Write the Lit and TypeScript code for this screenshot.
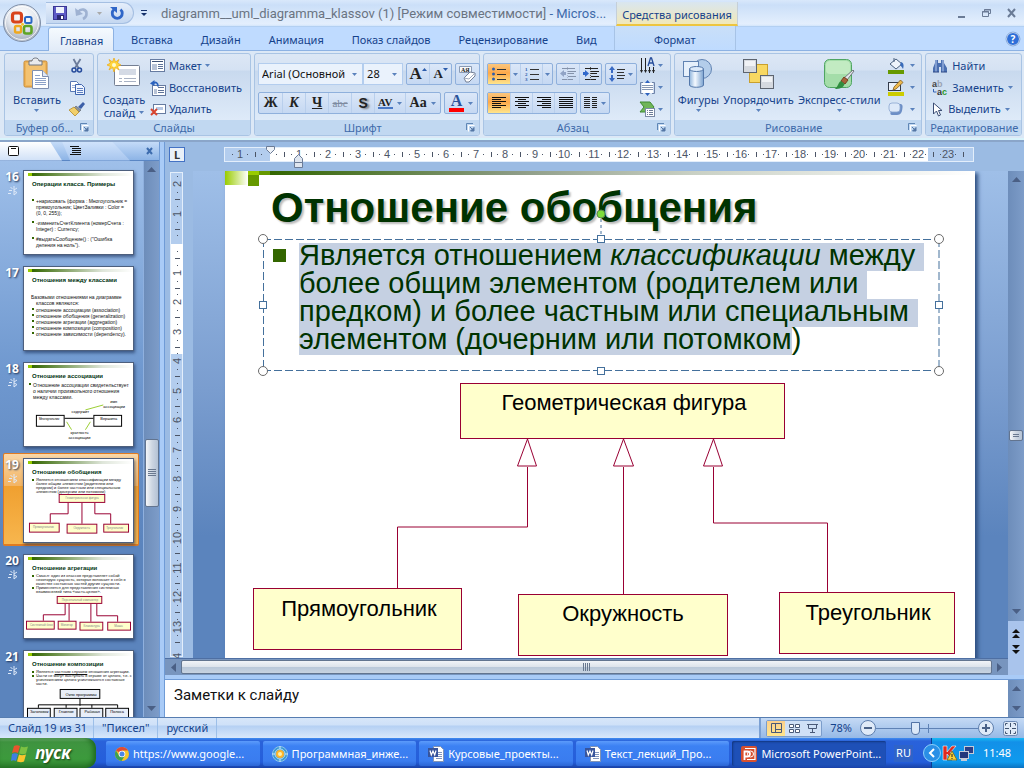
import { LitElement, html, svg, css, TemplateResult } from "lit";
import { customElement } from "lit/decorators.js";

const icon = (w: number, h: number, body: unknown, cls = "") =>
  html`<svg class="ico ${cls}" width=${w} height=${h} viewBox="0 0 ${w} ${h}" aria-hidden="true">${body}</svg>`;

const down = html`<svg class="ico arrow" width="5" height="3" viewBox="0 0 5 3" aria-hidden="true"><path d="M0 0h5L2.5 3z" fill="#5a82bd"/></svg>`;

const launcher = html`<button class="launch" aria-label="Параметры">${icon(9, 9, svg`<path d="M.5 7V.5H7" fill="none" stroke="#5f86b5"/><path d="M2.500 8.500V2.500h6" fill="none" stroke="#fff"/><path d="M4 4l3 3M8 4.500V8H4.500z" stroke="#5577a5" fill="#5577a5"/>`)}</button>`;

const icons = {
  orb: icon(40, 40, svg`
    <defs><radialGradient id="orb" cx=".5" cy=".3" r=".75"><stop offset="0" stop-color="#fff"/><stop offset=".5" stop-color="#e3e7ee"/><stop offset=".85" stop-color="#aab3c2"/><stop offset="1" stop-color="#f5f8fc"/></radialGradient></defs>
    <circle cx="20" cy="20" r="18.500" fill="url(#orb)" stroke="#7f8fa8"/>
    <circle cx="20" cy="20" r="16.500" fill="none" stroke="#fff" opacity=".8"/>
    <rect x="10.500" y="10" width="9" height="9" rx="2.500" fill="none" stroke="#d8431b" stroke-width="3.200"/>
    <rect x="23" y="14" width="6.500" height="6" rx="1.500" fill="none" stroke="#2a68c4" stroke-width="2"/>
    <rect x="13" y="23" width="6" height="6.500" rx="1.500" fill="none" stroke="#efa81e" stroke-width="2.400"/>
    <rect x="22" y="23" width="7.500" height="7.500" rx="2" fill="none" stroke="#5fa526" stroke-width="2.600"/>
    <circle cx="20.500" cy="21.300" r="1.500" fill="#f4c430"/>`),
  save: icon(14, 14, svg`<rect x=".5" y=".5" width="13" height="13" fill="#5d5ac6" stroke="#3b3794"/><rect x="3" y="1" width="8" height="6" fill="#eef2fc"/><rect x="4" y="9" width="7" height="5" fill="#2c2a73"/><rect x="8" y="10" width="2" height="3" fill="#fff"/>`),
  undo: icon(14, 13, svg`<path d="M3 5C6 1 12 2 11.500 7c0 2-1.500 4-3.500 5" fill="none" stroke="#9fb2d2" stroke-width="2.600"/><path d="M0 1l1 8 7-2z" fill="#9fb2d2"/>`),
  redo: icon(14, 14, svg`<path d="M10.500 3.500A5 5 0 1 1 4 3.500" fill="none" stroke="#2f66c8" stroke-width="2.800"/><path d="M0 1h7v6z" fill="#2f66c8"/>`),
  paste: icon(28, 32, svg`<rect x="1" y="3" width="23" height="26" rx="1.500" fill="#efb458" stroke="#c78a36"/><rect x="3" y="5" width="19" height="22" fill="#f3c271"/><path d="M6 3h3c0-4 7-4 7 0h3v4H6z" fill="#e9eaec" stroke="#6f7580"/><path d="M9.500 12.500h10l6 6v12h-16z" fill="#fff" stroke="#7e8fb0"/><path d="M19.500 12.500v6h6" fill="#dfe7f5" stroke="#7e8fb0"/><path d="M12 17.500h5M12 20.500h11M12 22.500h11M12 24.500h11M12 26.500h11" stroke="#8ca1c8"/>`),
  cut: icon(12, 14, svg`<path d="M2.500 0L7.500 9M9.500 0L4 9" stroke="#6c7c9b" stroke-width="1.800"/><circle cx="3" cy="11" r="2" fill="none" stroke="#254b9c" stroke-width="1.500"/><circle cx="8.500" cy="11" r="2" fill="none" stroke="#254b9c" stroke-width="1.500"/>`),
  copy: icon(16, 14, svg`<path d="M1.500.5h6l2 2v8h-8z" fill="#fff" stroke="#5878b5"/><path d="M3 4.500h5M3 6.500h5" stroke="#9db2d9"/><path d="M6.500 3.500h6l3 3v7h-9z" fill="#eef4ff" stroke="#3d64ae"/><path d="M8 7.500h6M8 9.500h6M8 11.500h6" stroke="#5d7fc0"/>`),
  painter: icon(16, 14, svg`<path d="M9 5l5-5 2 2-4 5z" fill="#3c5fa8"/><path d="M7 4l5 4-2 2-5-4z" fill="#8c939e" stroke="#565c66" stroke-width=".6"/><path d="M0 8l5-3 5 5-4 4z" fill="#f1cf6b" stroke="#b18a2c" stroke-width=".8"/>`),
  newSlide: icon(34, 32, svg`<rect x="7.500" y="7.500" width="25" height="20" rx="1" fill="#fff" stroke="#747f93"/><rect x="12" y="11" width="17" height="6" fill="#d4dae5"/><path d="M12 20.500h3M17 20.500h12M12 23.500h3M17 23.500h12" stroke="#a8b2c4"/><path d="M7 0l1.500 4L12 1.500 10.500 5l3.500 2-3.500 1.500L12 12 8.500 9.500 7 14 5.500 9.500 2 12l1.500-3.500L0 7l3.500-2L2 1.500 5.500 4z" fill="#ffd53c" stroke="#eca812" stroke-width=".7"/><circle cx="7" cy="7" r="2" fill="#fffbd0"/>`),
  layout: icon(16, 13, svg`<rect x=".5" y=".5" width="14" height="12" fill="#fff" stroke="#667ba0"/><path d="M2 2.500h11" stroke="#3e5275"/><rect x="2" y="5" width="5" height="6" fill="#b8c3d6"/><path d="M8 5.500h5M8 7.500h5M8 9.500h5" stroke="#5f7499"/>`),
  reset: icon(16, 16, svg`<rect x="2.500" y="5.500" width="13" height="10" fill="#fff" stroke="#667ba0"/><path d="M8 7.500h6M8 10.500h6M8 12.500h6" stroke="#5f7499"/><rect x="4" y="9" width="3" height="5" fill="#b8c3d6"/><path d="M2 3.500c4-2 6-1 6 3" fill="none" stroke="#2b62bd" stroke-width="1.800"/><path d="M0 3.500L4.500 0v6z" fill="#2b62bd"/>`),
  del: icon(16, 13, svg`<rect x="3.500" y="1.500" width="12" height="9" fill="#fff" stroke="#667ba0"/><rect x="6" y="4" width="7" height="3" fill="#b7c8e4"/><path d="M1 6l6 6M7 6l-6 6" stroke="#d9442e" stroke-width="2"/>`),
  clear: icon(18, 17, svg`<path d="M.5.5h12v6H.5z" fill="#f7f9fc" stroke="#8a9bb5"/><text x="2" y="6" font-size="6" font-weight="bold" fill="#222">АЯ</text><path d="M5 12l6-6 5 1v3l-6 6H7z" fill="#fff" stroke="#737f95"/><path d="M5 12l5 1 6-6" fill="none" stroke="#a0aabd"/>`),
  bullets: icon(14, 14, svg`<g fill="#2f5fae"><circle cx="1.500" cy="2" r="1.500"/><circle cx="1.500" cy="7" r="1.500"/><circle cx="1.500" cy="12" r="1.500"/></g><path d="M5 2.500h9M5 7.500h9M5 12.500h9" stroke="#333"/>`),
  numbers: icon(14, 14, svg`<g fill="#2f5fae" font-size="5" font-weight="bold"><text x="0" y="4">1</text><text x="0" y="9">2</text><text x="0" y="14">3</text></g><path d="M5 2.500h9M5 7.500h9M5 12.500h9" stroke="#333"/>`),
  outdent: icon(16, 14, svg`<path d="M2 1.500h13M8 4.500h8M8 6.500h6M8 9.500h8M2 12.500h11" stroke="#8593ab"/><path d="M7.500 0v14" stroke="#a9b6cc" stroke-dasharray="1 1"/><path d="M0 6.500L4 3v2h2v3H4v2z" fill="#91a4c6"/>`),
  indent: icon(16, 14, svg`<path d="M2 1.500h13M8 4.500h8M8 6.500h6M8 9.500h8M2 12.500h11" stroke="#222"/><path d="M7.500 0v14" stroke="#555" stroke-dasharray="1 1"/><path d="M6 6.500L2 3v2H0v3h2v2z" fill="#2f68cc"/>`),
  lineSp: icon(16, 16, svg`<path d="M3 0L6 4H4v3H2V4H0zM3 16l3-4H4V9H2v3H0z" fill="#3a6bc4"/><path d="M8 3.500h8M8 6.500h7M8 9.500h8M8 12.500h7" stroke="#333"/>`),
  left: icon(14, 12, svg`<path d="M0 .5h14M0 2.500h9M0 4.500h14M0 6.500h9M0 8.500h14M0 10.500h9" stroke="#111"/>`),
  center: icon(14, 12, svg`<path d="M0 .5h14M3 2.500h8M0 4.500h14M3 6.500h8M0 8.500h14M3 10.500h8" stroke="#111"/>`),
  right: icon(14, 12, svg`<path d="M0 .5h14M5 2.500h9M0 4.500h14M5 6.500h9M0 8.500h14M5 10.500h9" stroke="#111"/>`),
  justify: icon(14, 12, svg`<path d="M0 .5h14M0 2.500h14M0 4.500h14M0 6.500h14M0 8.500h14M0 10.500h14" stroke="#111"/>`),
  columns: icon(14, 12, svg`<path d="M0 .5h6M8 .5h5M0 2.500h6M8 2.500h5M0 4.500h6M8 4.500h5M0 6.500h6M8 6.500h5M0 8.500h6M8 8.500h5M0 10.500h6M8 10.500h5" stroke="#222"/>`),
  textDir: icon(15, 16, svg`<path d="M1.500 0v14M5.500 0v14M9.500 9v6M13.500 9v6" stroke="#222"/><path d="M0 12l1.500 3L3 12zM4 12l1.500 3L7 12zM8 12l1.500 3 1.500-3zM12 12l1.500 3 1.500-3z" fill="#222"/><path d="M8 8l2.500-8h1L14 8M9 5h4.500" fill="none" stroke="#254c9b" stroke-width="1.300"/>`),
  alignText: icon(15, 16, svg`<path d="M3 2.500H.5v11H3M12 2.500h2.500v11H12" fill="none" stroke="#6f83a8"/><rect x="2" y="3" width="11" height="10" fill="#fff"/><path d="M2 5.500h11M2 7.500h11M2 9.500h11" stroke="#8797b2"/><path d="M7.500 0l2.500 3h-5zM7.500 16l2.500-3h-5z" fill="#2f62bd"/>`),
  smartArt: icon(15, 16, svg`<path d="M0 1h10l4 5-4 5H0l4-5z" fill="#6fb558" stroke="#3f8a32"/><rect x="5.500" y="7.500" width="9" height="8" fill="#fff" stroke="#7a8aa5"/><path d="M7 9.500h1M9 9.500h4M7 11.500h1M9 11.500h4M7 13.500h1M9 13.500h4" stroke="#6b7c98"/>`),
  shapes: icon(32, 32, svg`<defs><linearGradient id="cyl"><stop offset="0" stop-color="#8fb4dc"/><stop offset=".4" stop-color="#f4f9ff"/><stop offset="1" stop-color="#7ba3d0"/></linearGradient></defs><circle cx="20" cy="11" r="9.500" fill="#b3cdea" stroke="#6183b2"/><rect x="1.500" y="3.500" width="15" height="15" fill="#e6f0fb" stroke="#6183b2"/><path d="M7.500 11v16c0 3 14 3 14 0V11z" fill="url(#cyl)" stroke="#5478aa"/><ellipse cx="14.500" cy="11" rx="7" ry="2.500" fill="#dceafa" stroke="#5478aa"/>`),
  arrange: icon(32, 32, svg`<rect x="6.500" y="6.500" width="18" height="18" fill="#f8d862" stroke="#c9a02d"/><rect x=".5" y="1.500" width="13" height="13" fill="#d5d9df" stroke="#5d646f"/><rect x="2" y="3" width="10" height="5" fill="#f0f2f5"/><rect x="17.500" y="17.500" width="13" height="13" fill="#d5d9df" stroke="#5d646f"/><rect x="19" y="19" width="10" height="5" fill="#f0f2f5"/>`),
  styles: icon(32, 32, svg`<rect x="1.500" y="1.500" width="27" height="28" rx="5" fill="#a4dda9" stroke="#4fa562"/><rect x="3" y="3" width="24" height="13" rx="4" fill="#c2ebc2"/><path d="M30 12l1 1-7 9-3-2z" fill="#e4e6e9" stroke="#737880"/><path d="M21 19l4 3-3 4-4-3z" fill="#a5633a" stroke="#75411f"/><path d="M18 23l3.500 3c-1 4-5 5-10 5 4-2 3-6 6.500-8z" fill="#2f8d3e"/>`),
  fill: icon(16, 16, svg`<path d="M2 6l6-5 6 5-6 5z" fill="#eff4fb" stroke="#4b617f"/><path d="M6 4V0" stroke="#4b617f"/><path d="M13 4c3 1 3 4 2 7-1-2-2-3-3-4z" fill="#396bb9"/><rect x="0" y="12" width="16" height="4" fill="#669900"/>`),
  outline: icon(16, 16, svg`<rect x=".5" y="2.500" width="12" height="8" fill="#eaf1fb" stroke="#333b4a"/><path d="M12.500 0L15 2.500 8 9l-3 1 1-3z" fill="#eeb94d" stroke="#7e5a20" stroke-width=".8"/><rect x="0" y="12" width="16" height="4" fill="#cccc00"/>`),
  effects: icon(16, 14, svg`<path d="M3 9l3-7h6c3 0 3 2 2 7-1 3-3 4-5 4H4c-2 0-2-2-1-4z" fill="#6d8fc6"/><rect x="1" y="1" width="11" height="9" rx="3" fill="#dde9f9" stroke="#8aa6d0" stroke-width=".8"/>`),
  find: icon(16, 14, svg`<path d="M3 1h3v3h3V1h3v3l3 5v4H9V8H7v5H1V9l2-5z" fill="#4a6fb1"/><path d="M4 1v12M11 1v12" stroke="#b5caee"/><path d="M1 13h6M9 13h6" stroke="#2a4684"/>`),
  replace: icon(16, 16, svg`<g class="abc"><text x="0" y="7" fill="#444">a<tspan fill="#9aa3b3">b</tspan></text><text x="5" y="15" fill="#333">a<tspan fill="#2c9a2c">c</tspan></text></g><path d="M1.500 9v3h3" fill="none" stroke="#3563b5"/>`),
  select: icon(12, 15, svg`<path d="M1.500 1v11l3-3 2 5 2-1-2-4.500H10z" fill="#fff" stroke="#3d4e75"/>`),
  word: icon(16, 16, svg`<path d="M5.500.5h7l3 3v12h-10z" fill="#fff" stroke="#8193b4"/><path d="M8 6.500h6M8 8.500h6M8 10.500h6M8 12.500h6" stroke="#7f95bf"/><rect x="0" y="2" width="10" height="9" fill="#37549c"/><path d="M2 4.500l1.300 4.500 1.700-4 1.700 4L8 4.500" fill="none" stroke="#fff" stroke-width="1.200"/>`),
  ppt: icon(16, 16, svg`<rect width="16" height="16" rx="2" fill="#d8502f"/><path d="M4 2.500h10v11H6" fill="none" stroke="#fff" stroke-width="1.200"/><path d="M3.500 14V5.500h3a2.500 2.500 0 0 1 0 5h-3" fill="none" stroke="#fff" stroke-width="1.800"/><circle cx="9.500" cy="8" r="3" fill="none" stroke="#fff"/>`),
  chrome: icon(14, 14, svg`<circle cx="7" cy="7" r="7" fill="#f5c52a"/><path d="M7 7L1 3.400A7 7 0 0 1 13 3.500H7z" fill="#dd4b39"/><path d="M1 3.400A7 7 0 0 0 6.500 14L10 8.500 4.300 9z" fill="#3ba055"/><circle cx="7" cy="7" r="3.300" fill="#fff"/><circle cx="7" cy="7" r="2.500" fill="#4a86e8"/>`),
  globe: icon(16, 16, svg`<circle cx="8" cy="8" r="7.500" fill="#3b9ad5" stroke="#8cc3ea"/><circle cx="8" cy="8" r="5" fill="none" stroke="#b6dcf3"/><circle cx="8" cy="8" r="4" fill="#ffb52b"/><circle cx="8" cy="8" r="2" fill="#fff0a8"/><path d="M8 0v3M8 13v3M0 8h3M13 8h3" stroke="#cfe8f8"/>`),
  anim: icon(9, 10, svg`<path d="M2.500 1l2 2M6 0v9M1 4.500h3M0 7.500h3M6 4l3-2M6 9l3-2.500-3-1.500" fill="none" stroke="#dfe9f8"/>`),
};

interface Small { i: TemplateResult; t?: string; d?: boolean; }
const small = (s: Small) => html`<button class="small">${s.i}${s.t ? html`<span>${s.t}</span>` : ""}${s.d ? down : ""}</button>`;
const big = (i: TemplateResult, t: TemplateResult | string) => html`<button class="big">${i}<span>${t}</span></button>`;
const group = (cls: string, label: string, body: TemplateResult, launch = true) => html`
  <section class="group ${cls}" aria-label=${label}>
    <div class="group-body">${body}</div>
    <div class="group-label"><span>${label}</span>${launch ? launcher : ""}</div>
  </section>`;

const UP = html`<svg class="ico" width="9" height="5" viewBox="0 0 9 5" aria-hidden="true"><path d="M4.500 0L9 5H0z" fill="#4a5f85"/></svg>`;
const DN = html`<svg class="ico" width="9" height="5" viewBox="0 0 9 5" aria-hidden="true"><path d="M0 0h9L4.500 5z" fill="#4a5f85"/></svg>`;

const range = (a: number, b: number) => Array.from({ length: b - a + 1 }, (_, k) => a + k);
const CM = 29.5;

const hRuler = svg`
  <rect x=".5" y=".5" width="749" height="14" fill="#b3cdee" stroke="#e3eefb"/>
  <rect x="46" y="1" width="658" height="13" fill="#fff"/>
  ${range(-1, 23).filter((n) => n !== 0).map((n) => svg`<text x=${Math.round(45 + n * CM)} y="11" text-anchor="middle">${Math.abs(n)}</text>`)}
  ${range(-1, 23).map((n) => {
    const x = Math.round(45 + n * CM);
    return svg`<rect x=${x - 8} y="7" width="1" height="1"/><rect x=${x + 7} y="7" width="1" height="1"/>${x + 15 < 748 ? svg`<rect x=${x + 15} y="5" width="1" height="5"/>` : ""}`;
  })}`;

const vRuler = svg`
  <rect x=".5" y=".5" width="12" height="484" fill="#b3cdee" stroke="#e3eefb"/>
  <rect x="1" y="72" width="12" height="110" fill="#fff"/>
  ${range(-2, 14).filter((n) => n !== 0).map((n) => {
    const y = Math.round(71 + n * CM);
    return svg`<text transform="translate(11 ${y}) rotate(-90)" text-anchor="middle">${n === 14 ? 4 : Math.abs(n)}</text>`;
  })}
  ${range(-2, 13).map((n) => {
    const y = Math.round(71 + n * CM);
    return svg`<rect x="7" y=${y - 8} width="1" height="1"/><rect x="7" y=${y + 8} width="1" height="1"/><rect x="5" y=${y + 15} width="5" height="1"/>`;
  })}`;

const thumbs: { n: number; anim: boolean; title: string; body: TemplateResult }[] = [
  { n: 16, anim: true, title: "Операции класса. Примеры", body: html`
    <ul class="wide"><li>+нарисовать (форма : Многоугольник = прямоугольник; ЦветЗаливки : Color = (0, 0, 255));</li><li>-изменитьСчетКлиента (номерСчета : Integer) : Currency;</li><li>#выдатьСообщение() : ("Ошибка деления на ноль").</li></ul>` },
  { n: 17, anim: false, title: "Отношения между классами", body: html`
    <div class="tiny"><p>Базовыми отношениями на диаграмме классов являются:</p><ul><li>отношение ассоциации (association)</li><li>отношение обобщения (generalization)</li><li>отношение агрегации (aggregation)</li><li>отношение композиции (composition)</li><li>отношение зависимости (dependency).</li></ul></div>` },
  { n: 18, anim: true, title: "Отношение ассоциации", body: html`
    <ul class="mid"><li>Отношение ассоциации свидетельствует о наличии произвольного отношения между классами.</li></ul>
    <svg class="mini" viewBox="0 0 110 40" aria-hidden="true"><g fill="#fff" stroke="#000"><rect x="12.500" y="15.500" width="28" height="11"/><rect x="70.500" y="15.500" width="28" height="11"/><path d="M41 18.500h29"/></g><path d="M80 5L62 10M48 30l-5-8M62 30l5-8" stroke="#9acd32"/><g font-size="4"><text x="15" y="20" font-size="3">Многоугольник</text><text x="77" y="20">Вершина</text><text x="48" y="13">содержит</text><text x="87" y="3">имя</text><text x="80" y="8">ассоциации</text><text x="47" y="34">кратность</text><text x="45" y="39">ассоциации</text></g></svg>` },
  { n: 19, anim: true, title: "Отношение обобщения", body: html`
    <ul class="tiny3"><li>Является отношением классификации между более общим элементом (родителем или предком) и более частным или специальным элементом (дочерним или потомком)</li></ul>
    <svg class="mini" viewBox="0 0 110 44" aria-hidden="true"><g fill="#ffffcc" stroke="#990033"><rect x="35.500" y="2.500" width="46" height="8"/><rect x="5.500" y="31.500" width="30" height="9"/><rect x="43.500" y="32.500" width="30" height="9"/><rect x="80.500" y="32.500" width="25" height="8"/></g><path d="M44.500 11v11h-18v9M58.500 11v21M71.500 11v11h16v10" fill="none" stroke="#990033"/><g fill="#888" font-size="3"><text x="42" y="7">Геометрическая фигура</text><text x="9" y="36">Прямоугольник</text><text x="50" y="37">Окружность</text><text x="83" y="37">Треугольник</text></g></svg>` },
  { n: 20, anim: true, title: "Отношение агрегации", body: html`
    <ul class="tiny3"><li>Смысл: один из классов представляет собой некоторую сущность, которая включает в себя в качестве составных частей другие сущности.</li><li>Применяется для представления системных взаимосвязей типа «часть-целое».</li></ul>
    <svg class="mini" viewBox="0 0 110 40" aria-hidden="true"><g fill="#ffffcc" stroke="#990033"><rect x="33.500" y="4.500" width="45" height="7"/><rect x="2.500" y="29.500" width="28" height="8"/><rect x="34.500" y="29.500" width="18" height="8"/><rect x="56.500" y="30.500" width="23" height="8"/><rect x="84.500" y="30.500" width="23" height="8"/></g><path d="M41.500 12v11h-22v6M45.500 12v17M67.500 12v18M73.500 12v12h21v6" fill="none" stroke="#990033"/><g fill="#888" font-size="3"><text x="38" y="9">Персональный компьютер</text><text x="6" y="34">Системный блок</text><text x="37" y="34">Монитор</text><text x="60" y="35">Клавиатура</text><text x="91" y="35">Мышь</text></g></svg>` },
  { n: 21, anim: true, title: "Отношение композиции", body: html`
    <ul class="tiny3 last21"><li>Является <u>частным случаем</u> отношения агрегации.</li><li>Части не могут выступать в отрыве от целого, т.е. с уничтожением целого уничтожаются составные части.</li></ul>
    <svg class="mini" viewBox="0 0 110 40" aria-hidden="true"><g fill="#e8eef8" stroke="#000"><rect x="36.500" y="1.500" width="40" height="9"/><rect x="3.500" y="20.500" width="23" height="12"/><rect x="30.500" y="20.500" width="23" height="12"/><rect x="56.500" y="20.500" width="23" height="12"/><rect x="82.500" y="20.500" width="23" height="12"/></g><path d="M56.500 11v7M14.500 20v-3h80v3M42.500 17v3M68.500 17v3" fill="none" stroke="#000"/><g font-size="4"><text x="42" y="8">Окно программы</text><text x="6" y="25">Заголовок</text><text x="35" y="25">Главное</text><text x="61" y="25">Рабочая</text><text x="87" y="25">Полоса</text></g></svg>` },
];

const handleC = (x: string, y: string) => svg`<circle cx=${x} cy=${y} r="4.500" fill="#fff" stroke="#6b6b6b"/>`;
const handleS = (x: string, y: string) => svg`<svg x=${x} y=${y} overflow="visible"><rect x="-3.500" y="-3.500" width="7" height="7" fill="#fff" stroke="#44709c"/></svg>`;

@customElement("app-root")
export class AppRoot extends LitElement {
  static styles = css`
    :host { display: flex; flex-direction: column; height: 100vh; overflow: hidden; background: #bfdbff; color: #15428b;
      font: 11px/14px "Noto Sans", "Open Sans", sans-serif; }
    * { box-sizing: border-box; }
    .ico { display: block; flex: none; overflow: visible; }
    .abc { font: bold 9px "Liberation Sans", sans-serif; }
    button { font: inherit; color: inherit; background: none; border: 0; padding: 0; margin: 0; display: flex; align-items: center; justify-content: center; white-space: nowrap; }
    .top { position: relative; display: flex; flex-direction: column; flex: none; }
    .titlebar { display: flex; height: 27px; padding-left: 46px; background: linear-gradient(#d9e8fb 0, #cbdff8 5px, #e4effd 24px, #d3e5fb); border-bottom: 1px solid #b3d0f2; }
    .orb { position: absolute; left: 2px; top: 3px; z-index: 2; }
    .qat { display: flex; align-items: center; gap: 8px; width: 88px; height: 22px; margin-top: 2px; padding-left: 7px; border: 1px solid #a5bfe2; border-left: 0; border-radius: 0 11px 11px 0; background: linear-gradient(#e5eefb, #c4d7f0); }
    .more { width: 20px; height: 25px; }
    .doc { margin: 0; flex: none; width: 462px; padding-left: 7px; font: 13px/28px Roboto, "Noto Sans", sans-serif; color: #6a7482; white-space: nowrap; overflow: hidden; }
    .doc b { font-weight: normal; color: #3e6aaa; }
    .ctx { width: 122px; margin-top: 2px; line-height: 26px; text-align: center; white-space: nowrap; border: solid #c5cfd8; border-width: 0 1px; border-bottom: 2px solid #edc53f; background: linear-gradient(#d9e6f0, #f1e8b9); }
    .win { flex: 1; display: flex; justify-content: flex-end; align-items: center; gap: 16px; padding-right: 8px; }
    .tabs { display: flex; align-items: flex-end; height: 24px; padding-left: 48px; border-bottom: 1px solid #8db2e3; }
    .tabs a { color: inherit; text-decoration: none; padding: 0 14px; height: 24px; line-height: 27px; white-space: nowrap; }
    .tabs a.on { width: 66px; padding: 0 11px; line-height: 25px; margin: 0 3px -1px 0; border: 1px solid #8db2e3; border-bottom: 0; border-radius: 3px 3px 0 0; background: linear-gradient(#f5fafe, #e1ebf8); }
    .tabs a.fmt { margin-left: 3px; width: 122px; padding: 0; text-align: center; border: solid #a7c3e6; border-width: 0 1px; background: linear-gradient(#c9dff8, #bfdbff); }
    .tabs .help { margin-left: auto; margin-right: 4px; height: 22px; }

    .ribbon { display: flex; gap: 3px; flex: none; height: 89px; padding: 2px 2px 2px 4px; background: #dce8f6; border-bottom: 2px solid #d8f3fb; }
    .edge { flex: none; height: 2px; background: #8aa5c9; }
    .group { display: flex; flex-direction: column; min-width: 0; border: 1px solid #a9c4e4; border-radius: 3px; background: linear-gradient(#dce7f5 0, #d5e2f3 16px, #c8d9ee 17px, #dfebf9 68px); }
    .g1 { flex: 89 1 0; } .g2 { flex: 154 1 0; } .g3 { flex: 227 1 0; } .g4 { flex: 188 1 0; } .g5 { flex: 249 1 0; } .g6 { flex: 96 1 0; }
    .group-body { flex: 1; display: flex; align-items: stretch; min-height: 0; }
    .group-label { display: flex; align-items: center; height: 15px; padding: 0 4px; background: #c1d8f1; color: #3e6aaa; white-space: nowrap; border-radius: 0 0 2px 2px; }
    .group-label span { flex: 1; text-align: center; }
    .col { display: flex; flex-direction: column; padding-top: 1px; }
    .small { height: 22px; gap: 5px; justify-content: flex-start; }
    .big { flex-direction: column; justify-content: flex-start; padding-top: 4px; }
    .big span { line-height: 13px; display: flex; flex-direction: column; align-items: center; padding-top: 3px; gap: 3px; }
    .big .ln { display: flex; flex-direction: row; gap: 4px; margin-top: -3px; padding: 0; }
    .g1 .big { width: 64px; } .g1 .col { align-items: center; width: 16px; }
    .g2 .big { width: 52px; } .g2 .small { gap: 3px; }
    .g6 .col { padding-left: 6px; } .g6 .small { gap: 4px; }
    .rows { display: flex; flex-direction: column; gap: 7px; padding: 9px 3px 0; }
    .row { display: flex; gap: 3px; height: 22px; }
    .row.tight { gap: 0; }
    .set { display: flex; border: 1px solid #8fb0dc; border-radius: 2px; background: linear-gradient(#dbe7f8, #c5d8f2); }
    .set button { padding: 0 4px; gap: 4px; color: #222; font-family: "Liberation Serif", serif; font-size: 14px; font-weight: bold; }
    .set button + button { border-left: 1px solid #b9cfec; }
    .set .w22 { width: 23px; padding: 0; }
    .set .hot { background: linear-gradient(#fbc67e, #fda94a 45%, #ffe58c); }
    .set .it { font-style: italic; } .set .un { text-decoration: underline; }
    .set .st { text-decoration: line-through; color: #7d8aa0; font-size: 11px; font-weight: normal; }
    .set .sh { text-shadow: 2px 1px 2px #777; font-family: "Liberation Sans", sans-serif; }
    .set .av { font-size: 11px; padding: 0 3px; } .av i { font-style: normal; line-height: 9px; border-bottom: 2px solid #4a79c6; }
    .set .fc i { font-style: normal; color: #2b5399; line-height: 14px; font-size: 16px; border-bottom: 4px solid #f00; padding: 0 2px; }
    .set .gr { font-size: 17px; gap: 0; align-items: center; width: 22px; padding: 0; } .set .sm { font-size: 13px; }
    .combo { position: relative; height: 22px; }
    .combo select { appearance: none; width: 100%; height: 22px; border: 1px solid #b3cdee; border-radius: 0; background: #eaf2fc; color: #111; font: inherit; padding: 0 12px 0 3px; }
    .combo .arrow { position: absolute; right: 6px; top: 10px; pointer-events: none; }
    .c1 { width: 105px; } .c2 { width: 40px; margin-right: 3px; }
    .g4 .set button { padding: 0 3px; gap: 3px; } .g4 .set .w22 { padding: 0; width: 22px; } .g4 .set .w11 { padding: 0; width: 10px; }
    .g4 .col .small { gap: 3px; }
    .g5 .big { flex: 1 1 auto; padding-left: 1px; } .g5 .col { padding: 1px 6px 0; } .g5 .col .small { gap: 6px; }

    .main { flex: 1; display: flex; min-height: 0; }
    .nav { flex: none; width: 160px; display: flex; flex-direction: column; background: linear-gradient(#a3c3ec, #6f98cf 40%, #5b84bd 70%); border-right: 1px solid #6f9bd6; }
    .navtabs { display: flex; align-items: center; height: 19px; background: linear-gradient(#c4dbf8, #8db4e6); border-bottom: 1px solid #5a86c4; }
    .navtabs button { height: 19px; justify-content: flex-start; }
    .navtabs .t1 { width: 62px; padding-left: 8px; background: linear-gradient(#fff, #cfe0f7); clip-path: polygon(0 0, 50px 0, 100% 100%, 0 100%); }
    .navtabs .t2 { width: 68px; padding-left: 8px; background: linear-gradient(#cfe2fb, #a6c5ee); clip-path: polygon(0 0, 50px 0, 100% 100%, 8px 100%); }
    .navtabs .x { margin-left: auto; padding-right: 6px; height: 18px; }
    .navbody { flex: 1; display: flex; min-height: 0; }
    .thumbs { flex: 1; list-style: none; margin: 0; padding: 4px 4px 0 3px; overflow: hidden; display: flex; flex-direction: column; gap: 3px; }
    .thumb { flex: none; display: flex; gap: 3px; height: 93px; padding: 4px 4px 0 0; border: 1px solid transparent; }
    .thumb.on { background: linear-gradient(#f9d7a7, #f3b463 35%, #f0a030 36%, #f7b64e); border-color: #e07b21; border-bottom-width: 2px; border-radius: 2px; }
    .num { width: 16px; flex: none; display: flex; flex-direction: column; align-items: center; gap: 3px; color: #fff; font: bold 12px/13px "Noto Sans", sans-serif; text-shadow: 1px 1px 2px #1d3357; }
    .page { position: relative; flex: 1; height: 85px; border: 1px solid #4d5f7d; background: #fff; box-shadow: 1px 2px 3px rgba(20,40,80,.6); overflow: hidden; color: #111; font: 6px/6px "Liberation Sans", sans-serif; }
    .page::before { content: ""; display: block; height: 3px; margin: 2px 0 0 4px; background: linear-gradient(90deg, #336600, #dfe6da 70%, #fff); border-left: 4px solid #99cc00; }
    .page h3 { margin: 4px 0 2px 8px; font-size: 6px; line-height: 8px; color: #031; white-space: nowrap; }
    .page ul { margin: 0; padding: 0 2px 0 12px; list-style: none; } .page p { margin: 0; padding: 0 8px 1px 12px; text-indent: -5px; }
    .page li { position: relative; } .page li::before { content: ""; position: absolute; left: -4px; top: 1px; width: 2px; height: 2px; background: #360; }
    .page .wide { padding-top: 8px; padding-right: 4px; font-size: 5px; } .page .wide li { margin-bottom: 4px; }
    .page .mid { padding-left: 9px; font-size: 5px; }
    .page .tiny { padding-top: 8px; font-size: 5px; line-height: 6px; }
    .page .tiny3 { font-size: 4px; line-height: 4px; padding-right: 4px; }
    .page .last21 { padding-right: 0; }
    .page .mini { position: absolute; left: 0; bottom: 6px; width: 100%; }

    .vbar { flex: none; width: 16px; display: flex; flex-direction: column; align-items: center; padding: 6px 0; background: linear-gradient(90deg, #6d8dba, #7d9cc8); border-left: 1px solid #8fb0de; }
    .knob { border: 1px solid #62748f; border-radius: 2px; background: linear-gradient(90deg, #f4f6f9, #cdd6e2 50%, #b4c2d5); display: flex; align-items: center; justify-content: center; }
    .nav .knob { width: 14px; height: 68px; }
    .nav .s1 { flex: 266 1 0; } .nav .s2 { flex: 198 1 0; }
    .split { flex: none; width: 5px; background: #a9cbf7; border-right: 1px solid #6f9bd6; }

    .work { flex: 1; display: flex; flex-direction: column; min-width: 0; background: #a9cbf7; }
    .editor { flex: 1; min-height: 0; display: grid; grid-template: 29px 1fr 17px / 28px 1fr 16px; }
    .corner { display: flex; padding: 5px 0 0 4px; background: #9bbbe3; }
    .corner button { width: 16px; height: 15px; border: 1px solid #4472c4; background: #eaf0f8; color: #333; font-size: 11px; font-weight: bold; }
    .hr { grid-column: 2 / 4; background: #9bbbe3; padding: 5px 0 0 31px; overflow: hidden; }
    .hr text, .vr text { font: 11px "Liberation Sans", sans-serif; fill: #4c5566; } .hr svg, .vr svg { display: block; fill: #4c5566; overflow: visible; }
    .vr { background: #9bbbe3; padding: 1px 0 0 5px; overflow: hidden; min-height: 0; }
    .canvas { overflow: hidden; display: flex; padding: 0 33px 0 32px; min-height: 0; background: linear-gradient(#9fbfe8, #7a9dcf 45%, #5b84bd 75%); }
    .slide { position: relative; flex: 1; min-width: 0; height: 560px; background: #fff; box-shadow: 3px 2px 4px #2f4f80; color: #003300; font-family: "Liberation Sans", Arial, sans-serif; }
    .band { display: flex; height: 15px; }
    .band .fade { width: 23px; height: 14px; background: linear-gradient(90deg, #99cc00, #fff); }
    .band .sq { width: 11px; height: 15px; background: linear-gradient(#99cc00 4px, #669900 4px); }
    .band .sq2 { width: 11px; height: 4px; background: #669900; }
    .band .bar { flex: 1; height: 4px; background: linear-gradient(90deg, #336600, #8d9c86 35%, #c9d0c4 60%, #fff); }
    .slide h1 { margin: 0 0 0 46px; font-size: 42px; line-height: 44px; white-space: nowrap; text-shadow: 2px 2px 2px #bbb; }
    .box { position: relative; margin: 9px 36px 0 38px; height: 132px; padding: 4px 0 0 10px; display: flex; gap: 13px; font-size: 29px; line-height: 24px; }
    .dot { flex: none; width: 13px; height: 13px; margin-top: 6px; background: #336600; }
    .box p { margin: 0; display: flex; flex-direction: column; align-items: flex-start; white-space: pre; }
    .box mark { display: block; color: inherit; background: #c5d0e2; padding: 0 9px 4px 0; } .last { display: flex; } .box .last mark { padding-right: 0; }
    .sel { position: absolute; left: 0; top: 0; width: 100%; height: 100%; overflow: visible; }
    .diagram { display: block; width: 100%; margin-top: 9px; overflow: visible; }
    .diagram text { font: 22px "Liberation Sans", Arial, sans-serif; fill: #000; text-anchor: middle; }
    .right { border: 0; }
    .right .knob { width: 14px; height: 11px; }
    .right .s1 { flex: 252 1 0; } .right .s2 { flex: 170 1 0; }
    .pager { align-self: stretch; background: #a9c4ec; display: flex; flex-direction: column; align-items: center; gap: 7px; padding: 8px 0 0; height: 37px; margin: 7px 0 -6px; }
    .hbar { grid-column: 1 / 3; display: flex; align-items: center; gap: 5px; padding: 0 6px; background: #7895be; border-top: 1px solid #4e6fa3; }
    .hbar .knob { flex: 1; height: 14px; background: linear-gradient(#f1f3f7, #dde3eb 48%, #b9c7d8 50%, #c8d3e1); }
    .fill { background: #a9c4ec; }
    .notes { flex: none; display: flex; height: 38px; margin-top: 4px; border-top: 1px solid #6f9bd6; background: #fff; }
    .notes textarea { flex: 1; border: 0; margin: 0; padding: 6px 9px; resize: none; overflow: hidden; font: 15px/18px Roboto, "Noto Sans", sans-serif; color: #111; background: none; outline: 0; }
    .notes textarea::placeholder { color: #111; opacity: 1; }

    .status { flex: none; display: flex; height: 21px; border-top: 1px solid #567db1; background: linear-gradient(#d7e6f9 0, #cfe1f8 7px, #b5d0f3 8px, #d7e7fb); line-height: 20px; white-space: nowrap; }
    .status > span { padding: 0 8px; border-right: 1px solid #9dbfe8; } .status > .s0 { padding-right: 6px; }
    .stright { margin-left: auto; display: flex; align-items: center; padding: 0 6px 0 5px; background: linear-gradient(#c5daf5, #96b9e6); border-left: 2px solid #7ba0d3; }
    .views { display: flex; height: 17px; border: 1px solid #7b9dcb; border-radius: 2px; background: #cfe0f6; margin-right: 8px; }
    .views button { width: 18px; } .views .hot { background: linear-gradient(#fcd08c, #ffe58c); }
    .pct { padding-right: 8px; }
    .stright input { appearance: none; width: 102px; height: 16px; margin: 0; background: linear-gradient(#5f82b5, #5f82b5) 0 8px / 100% 1px no-repeat, linear-gradient(#5f82b5, #5f82b5) 52px 4px / 1px 9px no-repeat; }
    .stright input::-webkit-slider-thumb { appearance: none; width: 9px; height: 13px; background: #dbe8f8; border: 1px solid #5273a6; border-radius: 1px 1px 5px 5px; }
    .fit { margin-left: 9px; }

    .taskbar { flex: none; display: flex; height: 30px; background: linear-gradient(#3f8cf0 0, #2a62da 3px, #245edb 80%, #1941a5); color: #fff; }
    .start { width: 96px; gap: 6px; padding-right: 14px; border-radius: 0 10px 10px 0; background: linear-gradient(#79b879 0, #3f9440 4px, #3c9a3c 70%, #2a7a2a); box-shadow: inset -3px 0 5px #1f6a1f; font: italic bold 17px/20px "Noto Sans", sans-serif; text-shadow: 1px 1px 2px #143f14; }
    .tasks { flex: 1; display: flex; gap: 3px; padding: 3px 6px 2px 10px; min-width: 0; }
    .tasks button { flex: 1 1 0; min-width: 0; justify-content: flex-start; gap: 4px; padding-left: 9px; border-radius: 2px; background: linear-gradient(#5c9bfb, #3c81f3 5px, #3a7cef 80%, #2c66d4); }
    .tasks .on { background: #1e50b7; box-shadow: inset 1px 1px 2px #12357e; }
    .lang { width: 19px; height: 17px; margin: 7px 18px 0 2px; background: #2f63c8; text-align: center; line-height: 16px; }
    .tray { display: flex; align-items: center; gap: 1px; width: 93px; background: linear-gradient(#19b9f4 0, #1290e8 4px, #0f9aee 80%, #0c72c0); border-left: 1px solid #0b3d91; }
    .tray button { margin-left: -9px; } .tray time { margin-left: 8px; }
  `;

  private titlebar() {
    return html`
      <button class="orb" aria-label="Office">${icons.orb}</button>
      <header class="titlebar">
        <div class="qat">
          <button aria-label="Сохранить">${icons.save}</button>
          <button aria-label="Отменить">${icons.undo}</button>
          ${icon(5, 3, svg`<path d="M0 0h5L2.500 3z" fill="#a9a9a9"/>`)}
          <button aria-label="Повторить">${icons.redo}</button>
        </div>
        <button class="more" aria-label="Настройка">${icon(6, 6, svg`<path d="M0 .5h6" stroke="#15306b"/><path d="M0 3h6L3 6z" fill="#15306b"/>`)}</button>
        <h2 class="doc">diagramm__uml_diagramma_klassov (1) [Режим совместимости] <b>- Micros...</b></h2>
        <div class="ctx">Средства рисования</div>
        <div class="win">
          <button aria-label="Свернуть">${icon(9, 10, svg`<path d="M1 9h7" stroke="#6a7b96" stroke-width="2"/>`)}</button>
          <button aria-label="Восстановить окно">${icon(9, 8, svg`<path d="M2.500 2V.5h6v4H7M.5 2.500h6v5h-6z" fill="none" stroke="#6a7b96"/><path d="M0 3h7M2 1h7" stroke="#6a7b96"/>`)}</button>
          <button aria-label="Закрыть">${icon(9, 8, svg`<path d="M1 0l7 8M8 0L1 8" stroke="#6a7b96" stroke-width="2"/>`)}</button>
        </div>
      </header>
      <nav class="tabs">
        <a class="on" href="#">Главная</a><a href="#">Вставка</a><a href="#">Дизайн</a><a href="#">Анимация</a><a href="#">Показ слайдов</a><a href="#">Рецензирование</a><a href="#">Вид</a><a class="fmt" href="#">Формат</a>
        <button class="help" aria-label="Справка">${icon(14, 14, svg`<circle cx="7" cy="7" r="6.500" fill="#2f6fd8" stroke="#fff"/><circle cx="7" cy="7" r="6.900" fill="none" stroke="#4a78bd" stroke-width=".6"/><text x="7" y="11" text-anchor="middle" font-size="10" font-weight="bold" fill="#fff">?</text>`)}</button>
      </nav>`;
  }

  private ribbon() {
    return html`<div class="ribbon">
      ${group("g1", "Буфер об...", html`${big(icons.paste, html`Вставить${down}`)}<div class="col">${small({ i: icons.cut })}${small({ i: icons.copy })}${small({ i: icons.painter })}</div>`)}
      ${group("g2", "Слайды", html`${big(icons.newSlide, html`Создать<span class="ln">слайд ${down}</span>`)}<div class="col">${small({ i: icons.layout, t: "Макет", d: true })}${small({ i: icons.reset, t: "Восстановить" })}${small({ i: icons.del, t: "Удалить" })}</div>`, false)}
      ${group("g3", "Шрифт", html`<div class="rows">
        <div class="row tight">
          <label class="combo c1"><select aria-label="Шрифт"><option>Arial (Основной</option></select>${down}</label>
          <label class="combo c2"><select aria-label="Размер"><option>28</option></select>${down}</label>
          <div class="row">
            <div class="set"><button class="gr" aria-label="Увеличить">A${icon(5, 12, svg`<path d="M0 3h5L2.500 0z" fill="#2c5cab"/>`)}</button><button class="gr sm" aria-label="Уменьшить">A${icon(5, 12, svg`<path d="M0 0h5L2.500 3z" fill="#2c5cab"/>`)}</button></div>
            <div class="set"><button class="w22" aria-label="Очистить">${icons.clear}</button></div>
          </div>
        </div>
        <div class="row">
          <div class="set"><button class="w22">Ж</button><button class="w22 it">К</button><button class="w22 un">Ч</button><button class="w22 st">abc</button><button class="w22 sh">S</button><button class="av"><i>AV</i>${down}</button><button>Aa${down}</button></div>
          <div class="set"><button class="fc"><i>A</i>${down}</button></div>
        </div></div>`)}
      ${group("g4", "Абзац", html`<div class="rows">
        <div class="row">
          <div class="set"><button class="w22 hot" aria-label="Маркеры">${icons.bullets}</button><button class="w11" aria-label="Виды маркеров">${down}</button><button class="w22" aria-label="Нумерация">${icons.numbers}</button><button class="w11" aria-label="Виды нумерации">${down}</button></div>
          <div class="set"><button class="w22" aria-label="Уменьшить отступ">${icons.outdent}</button><button class="w22" aria-label="Увеличить отступ">${icons.indent}</button></div>
          <div class="set"><button aria-label="Интервал">${icons.lineSp}${down}</button></div>
        </div>
        <div class="row">
          <div class="set"><button class="w22 hot" aria-label="По левому краю">${icons.left}</button><button class="w22" aria-label="По центру">${icons.center}</button><button class="w22" aria-label="По правому краю">${icons.right}</button><button class="w22" aria-label="По ширине">${icons.justify}</button></div>
          <div class="set"><button aria-label="Колонки">${icons.columns}${down}</button></div>
        </div></div>
        <div class="col">${small({ i: icons.textDir, d: true })}${small({ i: icons.alignText, d: true })}${small({ i: icons.smartArt, d: true })}</div>`)}
      ${group("g5", "Рисование", html`${big(icons.shapes, html`Фигуры${down}`)}${big(icons.arrange, html`Упорядочить${down}`)}${big(icons.styles, html`Экспресс-стили${down}`)}<div class="col">${small({ i: icons.fill, d: true })}${small({ i: icons.outline, d: true })}${small({ i: icons.effects, d: true })}</div>`)}
      ${group("g6", "Редактирование", html`<div class="col">${small({ i: icons.find, t: "Найти" })}${small({ i: icons.replace, t: "Заменить", d: true })}${small({ i: icons.select, t: "Выделить", d: true })}</div>`, false)}
    </div><div class="edge"></div>`;
  }

  private nav() {
    return html`<aside class="nav">
      <div class="navtabs">
        <button class="t1" aria-label="Слайды">${icon(11, 10, svg`<rect x=".5" y=".5" width="10" height="9" rx="1" fill="#fff" stroke="#111"/><path d="M3 2.500h5" stroke="#111"/>`)}</button>
        <button class="t2" aria-label="Структура">${icon(12, 10, svg`<path d="M0 .5h9M2 2.500h9M2 4.500h9M2 6.500h9M0 8.500h11" stroke="#111"/>`)}</button>
        <button class="x" aria-label="Закрыть">${icon(7, 6, svg`<path d="M1 0l5 6M6 0L1 6" stroke="#3d6cae" stroke-width="2"/>`)}</button>
      </div>
      <div class="navbody">
        <ol class="thumbs">${thumbs.map((t) => html`<li class="thumb ${t.n === 19 ? "on" : ""}"><div class="num">${t.n}${t.anim ? icons.anim : ""}</div><div class="page"><h3>${t.title}</h3>${t.body}</div></li>`)}</ol>
        <div class="vbar">${UP}<div class="s1"></div><div class="knob">${icon(8, 8, svg`<path d="M0 .5h8M0 2.500h8M0 4.500h8M0 6.500h8" stroke="#69788f"/>`)}</div><div class="s2"></div>${DN}</div>
      </div>
    </aside>`;
  }

  private slide() {
    return html`<article class="slide">
      <div class="band"><div class="fade"></div><div class="sq"></div><div class="sq2"></div><div class="bar"></div></div>
      <h1>Отношение обобщения</h1>
      <div class="box">
        <span class="dot"></span>
        <p><mark>Является отношением <em>классификации</em> между</mark><mark>более общим элементом (родителем или</mark><mark>предком) и более частным или специальным</mark><span class="last"><mark>элементом (дочерним или потомком</mark>)</span></p>
        <svg class="sel" aria-hidden="true">
          <g stroke="#44709c" stroke-dasharray="8 3"><line x1="0" y1=".5" x2="100%" y2=".5"/><line x1="0" y1="131.500" x2="100%" y2="131.500"/><line x1=".5" y1="0" x2=".5" y2="100%"/><line x1="100%" y1="0" x2="100%" y2="100%"/><line x1="50%" y1="-20" x2="50%" y2="0" stroke-dasharray="3 3"/></g>
          <svg x="50%" overflow="visible"><circle cx="0" cy="-25" r="4" fill="#7ddd3c" stroke="#5b8a4a"/></svg>
          ${handleC("0", "0")}${handleC("100%", "0")}${handleC("0", "100%")}${handleC("100%", "100%")}
          ${handleS("50%", "0")}${handleS("50%", "100%")}${handleS("0", "50%")}${handleS("100%", "50%")}
        </svg>
      </div>
      <svg class="diagram" viewBox="0 0 750 280">
        <g fill="#ffffcc" stroke="#990033"><rect x="235.500" y="3.500" width="324" height="55"/><rect x="28.500" y="208.500" width="208" height="61"/><rect x="293.500" y="214.500" width="209" height="61"/><rect x="554.500" y="212.500" width="175" height="61"/></g>
        <g fill="none" stroke="#990033"><path d="M302.500 59l9 27h-19zM398.500 59l10 27h-20zM488.500 59l9 27h-19z"/><path d="M302.500 87v60h-130v61M398.500 87v127M488.500 87v56h114v69"/></g>
        <text x="399" y="30">Геометрическая фигура</text><text x="134" y="236">Прямоугольник</text><text x="398" y="241">Окружность</text><text x="643" y="240">Треугольник</text>
      </svg>
    </article>`;
  }

  private work() {
    const dbl = (d: string) => icon(8, 9, svg`<path d=${d} fill="#111"/>`);
    return html`<main class="work">
      <div class="editor">
        <div class="corner"><button aria-label="Табуляция">L</button></div>
        <div class="hr"><svg width="750" height="15" aria-hidden="true">${hRuler}<path d="M42.500-.5h8v3l-4 4-4-4z" fill="#eef2f8" stroke="#6b7b96"/><path d="M70.500 15.500v-4l4-4 4 4v4zM70.500 15.500h8v5h-8z" fill="#dfe6f0" stroke="#6b7b96"/></svg></div>
        <div class="vr"><svg width="13" height="485" aria-hidden="true">${vRuler}</svg></div>
        <div class="canvas">${this.slide()}</div>
        <div class="vbar right">${UP}<div class="s1"></div><div class="knob">${icon(6, 4, svg`<path d="M0 .5h6M0 2.500h6" stroke="#69788f"/>`)}</div><div class="s2"></div>${DN}
          <div class="pager">${dbl("M4 0l4 4H0zM4 5l4 4H0z")}${dbl("M0 0h8L4 4zM0 5h8L4 9z")}</div></div>
        <div class="hbar">${icon(5, 9, svg`<path d="M5 0v9L0 4.500z" fill="#4a5f85"/>`)}<div class="knob">${icon(8, 8, svg`<path d="M.5 0v8M2.500 0v8M4.500 0v8M6.500 0v8" stroke="#69788f"/>`)}</div>${icon(5, 9, svg`<path d="M0 0v9l5-4.500z" fill="#4a5f85"/>`)}</div>
        <div class="fill"></div>
      </div>
      <div class="notes"><textarea aria-label="Заметки" placeholder="Заметки к слайду"></textarea><div class="vbar right">${UP}<div class="s1"></div>${DN}</div></div>
    </main>`;
  }

  private bottom() {
    const round = (d: string) => icon(16, 16, svg`<circle cx="8" cy="8" r="7.500" fill="#dfeaf8" stroke="#5e7fae"/><path d=${d} stroke="#4a6288" stroke-width="2"/>`);
    return html`<footer class="status">
        <span class="s0">Слайд 19 из 31</span><span>"Пиксел"</span><span>русский</span>
        <div class="stright">
          <div class="views"><button class="hot" aria-label="Обычный">${icon(11, 10, svg`<path d="M.5.5h10v9H.5zM4.500.5v9M4 6.500h6" fill="none" stroke="#4a5a78"/>`)}</button><button aria-label="Сортировщик">${icon(11, 9, svg`<path d="M.5.5h4v3h-4zM6.500.5h4v3h-4zM.5 5.500h4v3h-4zM6.500 5.500h4v3h-4z" fill="#fff" stroke="#4a5a78"/>`)}</button><button aria-label="Показ">${icon(11, 10, svg`<path d="M0 1.500h11M1.500 1.500v4h8v-4M5.500 6v3M3 9.500h5" fill="none" stroke="#4a5a78"/>`)}</button></div>
          <span class="pct">78%</span>
          <button aria-label="Мельче">${round("M4 8h8")}</button><input type="range" aria-label="Масштаб" min="0" max="100" value="38"><button aria-label="Крупнее">${round("M4 8h8M8 4v8")}</button>
          <button class="fit" aria-label="Вписать">${icon(15, 15, svg`<rect x=".5" y=".5" width="14" height="14" rx="2" fill="#dfeaf8" stroke="#6d8ab5"/><path d="M7.500 2v4M7.500 9v4M2 7.500h4M9 7.500h4" stroke="#40536f"/><path d="M2.500 4.500v-2h2M10.500 2.500h2v2M12.500 10.500v2h-2M4.500 12.500h-2v-2" fill="none" stroke="#40536f"/>`)}</button>
        </div>
      </footer>
      <div class="taskbar">
        <button class="start">${icon(18, 17, svg`<path d="M3 1c2-1 4-1 6 0L7 8C5 7 3 7 1 8z" fill="#e8552d"/><path d="M10 1.500c2 1 4 1 7 0l-2 7c-2 1-4 1-7 0z" fill="#7cc142"/><path d="M1 9c2-1 4-1 6 0l-2 7c-2-1-3-1-5 0z" fill="#3f7fe0"/><path d="M8 9.500c2 1 4 1 7 0l-2 7c-2 1-4 1-7 0z" fill="#fac52d"/>`)}пуск</button>
        <div class="tasks">
          <button>${icons.chrome}https://www.google...</button><button>${icons.globe}Программная_инже...</button><button>${icons.word}Курсовые_проекты...</button><button>${icons.word}Текст_лекций_Про...</button><button class="on">${icons.ppt}Microsoft PowerPoint...</button>
        </div>
        <div class="lang">RU</div>
        <div class="tray"><button aria-label="Скрытые значки">${icon(18, 18, svg`<circle cx="9" cy="9" r="8.500" fill="#2a8fe6" stroke="#8fd0fa"/><path d="M11 5L7 9l4 4" fill="none" stroke="#fff" stroke-width="2"/>`)}</button>
          ${icon(16, 16, svg`<path d="M1 1h4v6l5-6h4L8 8l6 7h-4L5 9v6H1z" fill="#e02b20" stroke="#fff" stroke-width=".6"/><path d="M10 6l5 9H5z" fill="#fbd13a" stroke="#7a5b00" stroke-width=".7"/><path d="M10 9v3M10 13v1" stroke="#222"/>`)}
          ${icon(15, 15, svg`<rect x="5.500" y=".5" width="9" height="7" fill="#2b3f87" stroke="#c5cbd8"/><rect x=".5" y="5.500" width="9" height="7" fill="#23377c" stroke="#c5cbd8"/><path d="M2 14h6" stroke="#c5cbd8" stroke-width="2"/>`)}
          <time>11:48</time></div>
      </div>`;
  }

  render() {
    return html`<div class="top">${this.titlebar()}</div>${this.ribbon()}<div class="main">${this.nav()}<div class="split"></div>${this.work()}</div>${this.bottom()}`;
  }
}
